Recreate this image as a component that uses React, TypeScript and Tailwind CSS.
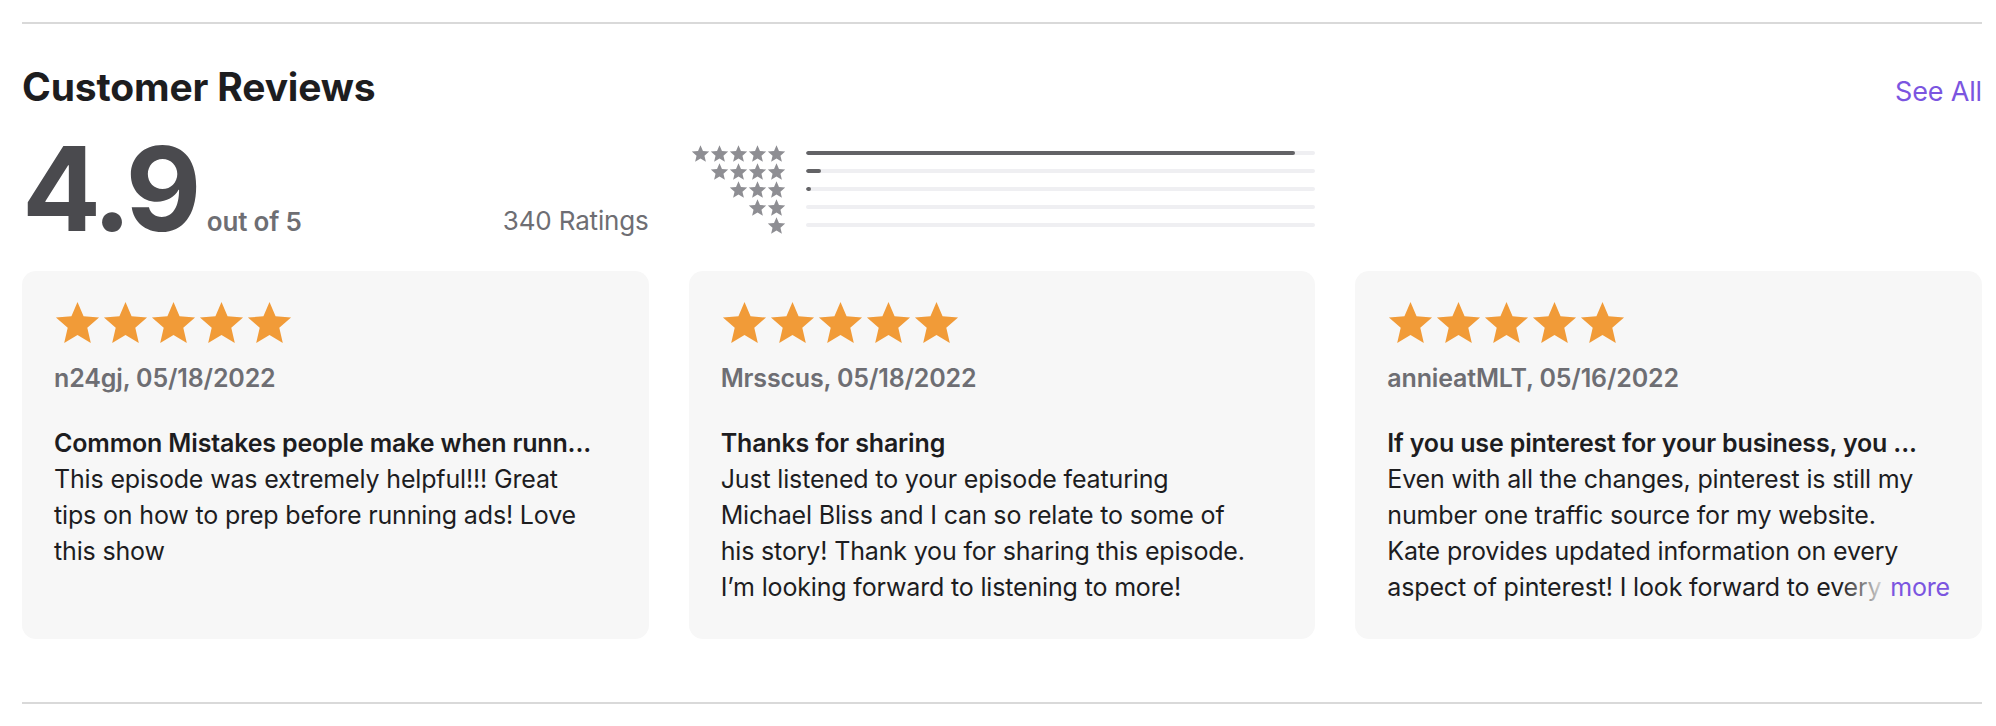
import React from 'react';

type Review = {
  author: string;
  date: string;
  title: string;
  lines: string[];
  more?: boolean;
};

const reviews: Review[] = [
  {
    author: 'n24gj',
    date: '05/18/2022',
    title: 'Common Mistakes people make when runn...',
    lines: [
      'This episode was extremely helpful!!! Great',
      'tips on how to prep before running ads! Love',
      'this show',
    ],
  },
  {
    author: 'Mrsscus',
    date: '05/18/2022',
    title: 'Thanks for sharing',
    lines: [
      'Just listened to your episode featuring',
      'Michael Bliss and I can so relate to some of',
      'his story! Thank you for sharing this episode.',
      'I\u2019m looking forward to listening to more!',
    ],
  },
  {
    author: 'annieatMLT',
    date: '05/16/2022',
    title: 'If you use pinterest for your business, you ...',
    lines: [
      'Even with all the changes, pinterest is still my',
      'number one traffic source for my website.',
      'Kate provides updated information on every',
      'aspect of pinterest! I look forward to every episode',
    ],
    more: true,
  },
];

// percent of ratings per star bucket, 5 down to 1
const histogram = [96, 3, 1, 0, 0];

const STAR = 'M12 1.5l3.1 7.3 7.9.7-6 5.2 1.8 7.8L12 18.4l-6.8 4.1 1.8-7.8-6-5.2 7.9-.7z';

function Star({ className }: { className: string }) {
  return (
    <svg viewBox="0 0 24 24" className={className}>
      <path d={STAR} fill="currentColor" />
    </svg>
  );
}

function Histogram() {
  return (
    <div className="flex flex-col pt-[29px]">
      {histogram.map((pct, i) => {
        const count = 5 - i;
        return (
          <div key={count} className="flex items-center h-[18px]">
            <div className="w-[97px] flex justify-end text-[#8e8e93]">
              {Array.from({ length: count }).map((_, j) => (
                <Star key={j} className="w-[19px] h-[19px] -my-[1px]" />
              ))}
            </div>
            <div className="ml-[20px] flex-1 h-[4px] rounded-full bg-[#efeff2] overflow-hidden">
              <div className="h-full rounded-full bg-[#636366]" style={{ width: pct + '%' }} />
            </div>
          </div>
        );
      })}
    </div>
  );
}

function ReviewCard({ review }: { review: Review }) {
  return (
    <div className="bg-[#f7f7f7] rounded-[14px] h-[368px] px-[32px] pt-[28px]">
      <div className="flex gap-[1px] text-[#f19b38]">
        {Array.from({ length: 5 }).map((_, i) => (
          <Star key={i} className="w-[47px] h-[47px]" />
        ))}
      </div>
      <div className="mt-[15px] text-[25px] font-semibold text-[#6e6e73] leading-[34px]">
        {review.author}, {review.date}
      </div>
      <div className="mt-[30px] text-[25px] font-semibold text-[#1d1d1f] leading-[36px] whitespace-nowrap overflow-hidden">
        {review.title}
      </div>
      <div className="text-[25px] text-[#1d1d1f] leading-[36px]">
        {review.lines.map((line, i) => {
          const last = review.more && i === review.lines.length - 1;
          if (!last) {
            return (
              <div key={i} className="whitespace-nowrap">
                {line}
              </div>
            );
          }
          return (
            <div key={i} className="flex whitespace-nowrap">
              <span className="relative flex-1 min-w-0 overflow-hidden">
                {line}
                <span className="absolute right-0 top-0 bottom-0 w-[50px] bg-gradient-to-r from-[#f7f7f7]/0 to-[#f7f7f7]" />
              </span>
              <span className="text-[#7b55e0]">more</span>
            </div>
          );
        })}
      </div>
    </div>
  );
}

export default function App() {
  return (
    <div className="w-[1996px] h-[726px] bg-white pl-[22px] pr-[14px] pt-[22px] font-['Inter','Liberation_Sans',sans-serif] tracking-[-0.01em]">
      <div className="h-[2px] bg-[#d9d9d9]" />

      <div className="flex items-baseline justify-between mt-[39px]">
        <h2 className="text-[39px] font-bold text-[#1d1d1f] leading-[48px]">Customer Reviews</h2>
        <a className="text-[27px] text-[#7b55e0] leading-[32px]">See All</a>
      </div>

      <div className="grid grid-cols-3 gap-x-[40px] mt-[4px] h-[128px]">
        <div className="flex items-end justify-between pb-[2px]">
          <div className="flex items-baseline">
            <span className="text-[117px] font-bold text-[#4a4a4e] leading-[100px] tracking-[-0.04em]">4.9</span>
            <span className="ml-[10px] text-[26px] font-semibold text-[#6e6e73]">out of 5</span>
          </div>
          <span className="text-[26px] text-[#6e6e73] mb-[1px]">340 Ratings</span>
        </div>
        <Histogram />
        <div />
      </div>

      <div className="grid grid-cols-3 gap-x-[40px] mt-[28px]">
        {reviews.map((r) => (
          <ReviewCard key={r.author} review={r} />
        ))}
      </div>

      <div className="h-[2px] bg-[#d9d9d9] mt-[63px]" />
    </div>
  );
}
